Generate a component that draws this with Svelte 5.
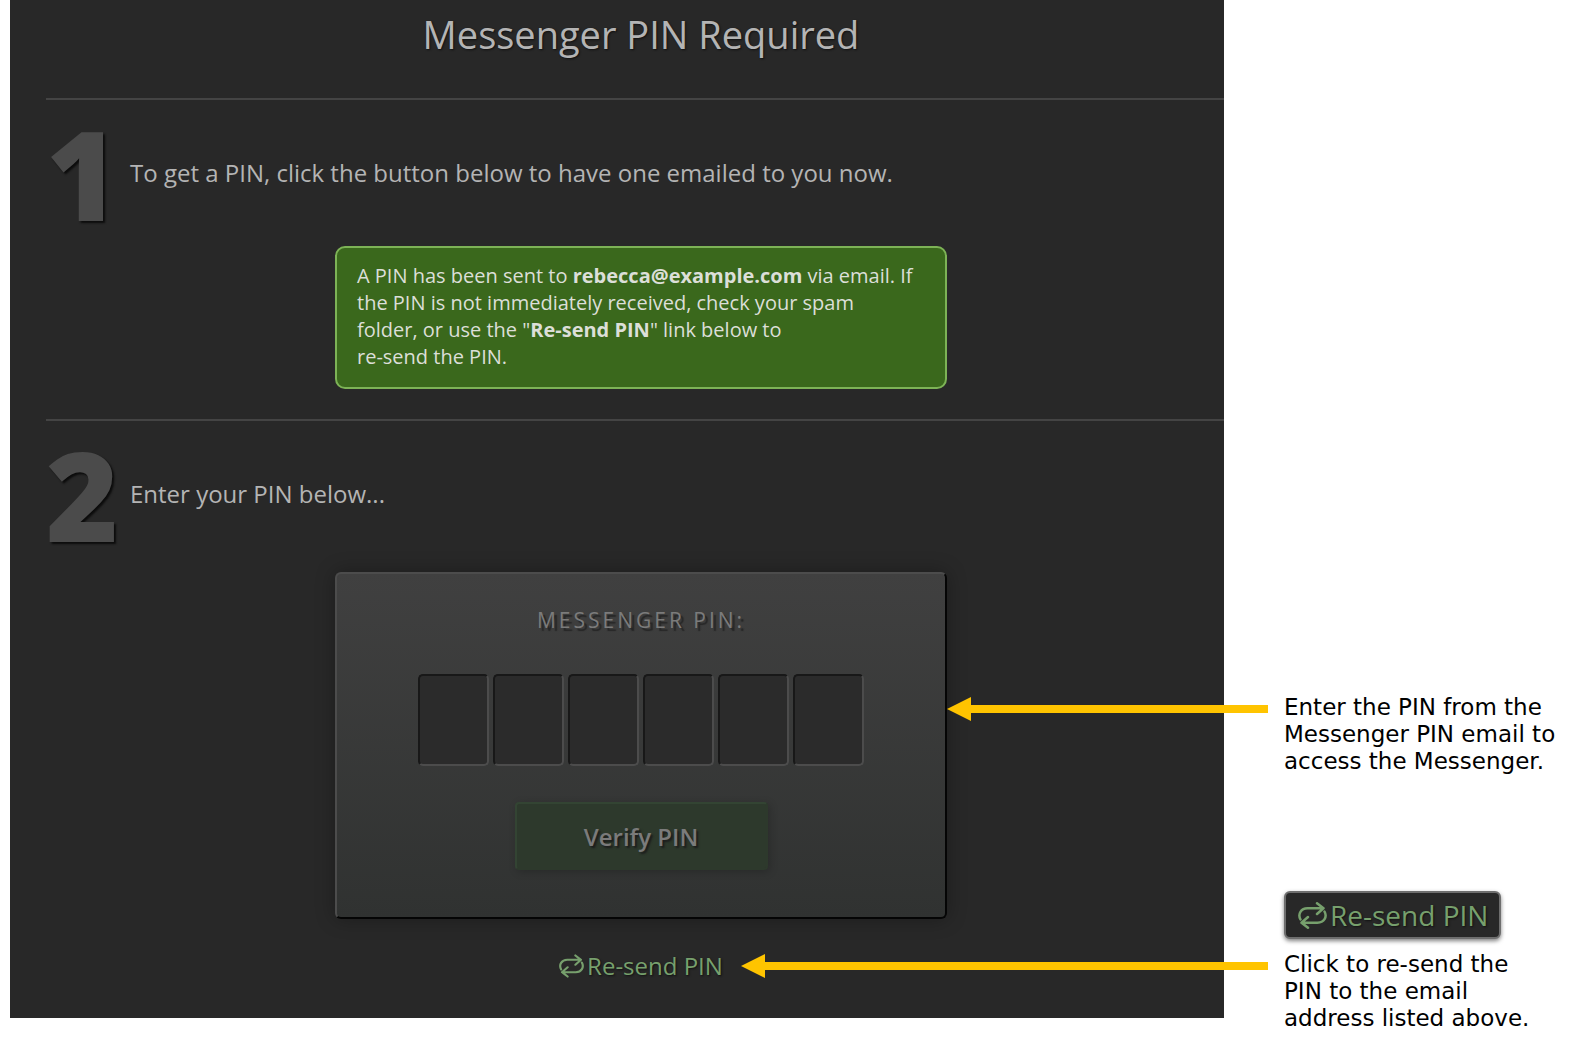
<script lang="ts">
  const PIN_LENGTH = 6;

  let pin: string[] = $state(Array(PIN_LENGTH).fill(''));
  let email = $state('rebecca@example.com');
</script>

{#snippet resendIcon()}
  <svg class="icon" viewBox="0 0 29 27" aria-hidden="true">
    <path d="M2.500 17.500C-.5 12 3 6.300 9.500 6.300H25.500M19 1.300L25.500 6.300L19 12" />
    <path d="M26.500 9.500C29.500 15 26 20.700 19.500 20.700H3.500M10 25.700L3.500 20.700L10 15" />
  </svg>
{/snippet}

{#snippet arrow()}
  <span class="head"></span>
  <span class="shaft"></span>
{/snippet}

<div class="page">
  <main class="panel">
    <div class="content">
      <h1>Messenger PIN Required</h1>

      <section>
        <div class="step">
          <span class="number">1</span>
          <p>To get a PIN, click the button below to have one emailed to you now.</p>
        </div>
        <p class="alert" role="status">
          A PIN has been sent to <strong>{email}</strong> via email. If<br />
          the PIN is not immediately received, check your spam<br />
          folder, or use the "<strong>Re-send PIN</strong>" link below to<br />
          re-send the PIN.
        </p>
      </section>

      <section>
        <div class="step">
          <span class="number">2</span>
          <p>Enter your PIN below...</p>
        </div>
        <form class="card" onsubmit={(e) => e.preventDefault()}>
          <label for="pin-0">Messenger PIN:</label>
          <div class="digits">
            {#each pin as _, i}
              <input id="pin-{i}" type="text" inputmode="numeric" maxlength="1" aria-label="Digit {i + 1}" bind:value={pin[i]} />
            {/each}
          </div>
          <button type="submit">Verify PIN</button>
        </form>
        <a class="resend" href="#resend">{@render resendIcon()}Re-send PIN</a>
      </section>
    </div>
  </main>

  <aside class="notes">
    <div class="note">
      <div class="arrow to-card">{@render arrow()}</div>
      <p>Enter the PIN from the<br />Messenger PIN email to<br />access the Messenger.</p>
    </div>
    <div class="note">
      <a class="resend large" href="#resend">{@render resendIcon()}Re-send PIN</a>
      <div class="arrow to-link">{@render arrow()}</div>
      <p>Click to re-send the<br />PIN to the email<br />address listed above.</p>
    </div>
  </aside>
</div>

<style>
  :global(body) {
    margin: 0;
    background: #fff;
  }

  .page {
    position: relative;
    display: flex;
    align-items: flex-start;
    font-family: 'Open Sans', sans-serif;
  }

  .panel {
    flex: 1;
    min-width: 0;
    margin-left: 10px;
    padding-left: 36px;
    padding-bottom: 36px;
    overflow: hidden;
    background: #282828;
    color: #b4b4b4;
  }

  /* runs past the clipped right edge of the panel */
  .content {
    margin-right: -12px;
  }

  h1 {
    margin: 0;
    padding: 6px 0 36px;
    font-size: 38px;
    line-height: 56px;
    font-weight: 400;
    text-align: center;
    text-shadow: 1px 1px 2px #111;
  }

  section {
    display: flex;
    flex-direction: column;
    align-items: center;
    border-top: 2px solid #444;
  }

  .step {
    display: flex;
    align-items: center;
    align-self: stretch;
    height: 146px;
  }

  .number {
    width: 84px;
    font-size: 124px;
    line-height: 144px;
    font-weight: 800;
    color: #4b4b4b;
    text-shadow: 2px 2px 2px #0c0c0c;
  }

  .step p {
    margin: 0;
    font-size: 24px;
    line-height: 32px;
  }

  .alert {
    box-sizing: border-box;
    width: 612px;
    margin: 0 0 30px;
    padding: 14px 20px 17px;
    border: 2px solid #7db356;
    border-radius: 10px;
    background: #3a681c;
    color: #dcdfd8;
    font-size: 20px;
    line-height: 27px;
  }

  .card {
    box-sizing: border-box;
    display: flex;
    flex-direction: column;
    align-items: center;
    width: 612px;
    margin-top: 5px;
    padding: 30px 0 47px;
    border: 2px solid;
    border-color: #4c4c4c #050505 #050505 #4c4c4c;
    border-radius: 6px;
    background: linear-gradient(#404040, #303231);
    box-shadow: 0 0 20px rgba(0, 0, 0, 0.3);
  }

  label {
    font-size: 21px;
    line-height: 32px;
    letter-spacing: 3px;
    text-transform: uppercase;
    color: #7b7b7b;
    text-shadow: 3px 3px 1px #262626;
  }

  .digits {
    display: flex;
    gap: 4px;
    margin: 38px 0 36px;
  }

  input {
    box-sizing: border-box;
    width: 71px;
    height: 92px;
    padding: 0;
    border: 2px solid;
    border-color: #181818 #4c4c4c #4c4c4c #181818;
    border-radius: 5px;
    background: #2b2b2b;
    color: #b4b4b4;
    font: inherit;
    font-size: 38px;
    text-align: center;
  }

  button {
    width: 253px;
    height: 68px;
    border: 2px solid;
    border-color: #334433 #2d392c #2d392c #334433;
    border-radius: 4px;
    background: #2d392c;
    color: #7b7b7b;
    font: inherit;
    font-size: 24px;
    font-weight: 600;
    text-shadow: 2px 2px 2px #1c1c1c;
    box-shadow: 2px 2px 8px rgba(0, 0, 0, 0.2);
  }

  .resend {
    display: flex;
    align-items: center;
    gap: 3px;
    margin-top: 31px;
    color: #77a06d;
    font-size: 24px;
    line-height: 32px;
    text-decoration: none;
    text-shadow: 1px 1px 2px #111;
  }

  .icon {
    width: 25px;
    height: 24px;
    fill: none;
    stroke: currentColor;
    stroke-width: 2.500;
    stroke-linecap: round;
    stroke-linejoin: round;
  }

  .resend.large {
    box-sizing: border-box;
    width: 217px;
    height: 48px;
    margin: 0 0 12px;
    padding-left: 12px;
    border: 2px solid #6e6e6e;
    border-radius: 6px;
    background: #282828;
    box-shadow: 0 2px 4px rgba(0, 0, 0, 0.5);
    font-family: 'Open Sans', sans-serif;
    font-size: 28px;
  }

  .large .icon {
    width: 29px;
    height: 27px;
  }

  .notes {
    width: 296px;
    padding: 694px 0 0 60px;
    color: #000;
    font-family: Verdana, 'DejaVu Sans', sans-serif;
    font-size: 23px;
    line-height: 27px;
  }

  .note + .note {
    margin-top: 116px;
  }

  .note p {
    margin: 0;
    white-space: nowrap;
  }

  /* callout arrows stretch from the notes to the centred card and link */
  .arrow {
    position: absolute;
    right: 312px;
    display: flex;
    align-items: center;
    height: 30px;
  }

  .to-card {
    left: calc(50% + 157px);
  }

  .to-link {
    left: calc(50% - 49px);
  }

  .head {
    width: 24px;
    height: 24px;
    background: #ffc400;
    clip-path: polygon(0 50%, 100% 0, 100% 100%);
  }

  .shaft {
    flex: 1;
    height: 8px;
    background: #ffc400;
  }
</style>
